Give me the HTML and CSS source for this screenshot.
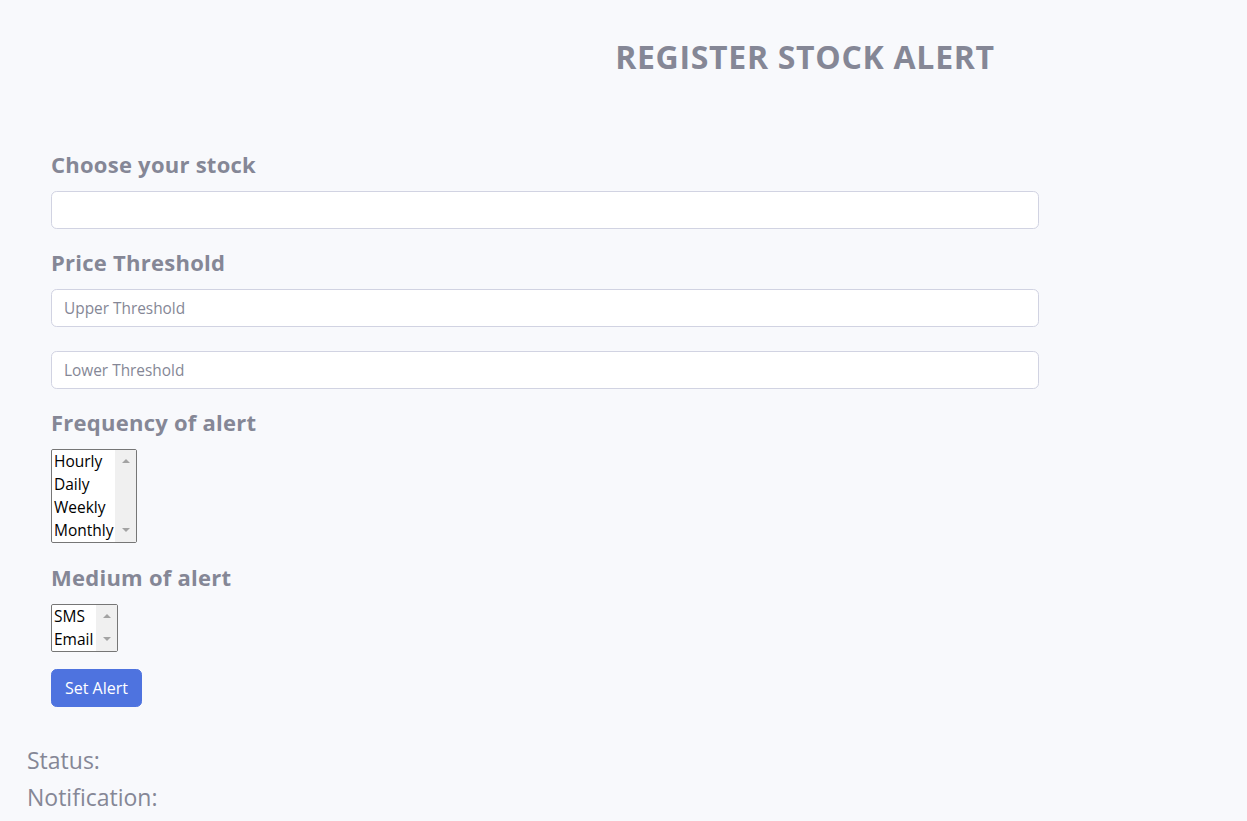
FILE: index.html
```html
<!DOCTYPE html>
<html lang="en">
<head>
<meta charset="utf-8">
<title>Register Stock Alert</title>
<link rel="stylesheet" href="styles.css">
</head>
<body>
<header class="page-head">
  <h2 class="title">REGISTER STOCK ALERT</h2>
</header>
<form class="alert-form">
  <label class="field-label" for="stock">Choose your stock</label>
  <input class="text-input block-gap" id="stock" type="text">

  <label class="field-label" for="upper">Price Threshold</label>
  <input class="text-input pair-gap" id="upper" type="text" placeholder="Upper Threshold">
  <input class="text-input block-gap" id="lower" type="text" placeholder="Lower Threshold">

  <label class="field-label" for="freq">Frequency of alert</label>
  <div class="list-box freq-gap">
    <select class="list-select freq" id="freq" multiple size="4">
      <option>Hourly</option>
      <option>Daily</option>
      <option>Weekly</option>
      <option>Monthly</option>
    </select>
    <div class="scroll-track" aria-hidden="true">
      <span class="arrow-up"></span>
      <span class="arrow-down"></span>
    </div>
  </div>

  <label class="field-label" for="medium">Medium of alert</label>
  <div class="list-box btn-gap">
    <select class="list-select medium" id="medium" multiple size="2">
      <option>SMS</option>
      <option>Email</option>
    </select>
    <div class="scroll-track" aria-hidden="true">
      <span class="arrow-up"></span>
      <span class="arrow-down"></span>
    </div>
  </div>

  <button class="btn-primary" type="button">Set Alert</button>
</form>
<section class="results">
  <h4 class="result-line">Status:</h4>
  <h4 class="result-line">Notification:</h4>
</section>
</body>
</html>
```
FILE: styles.css
```css
html, body {
  margin: 0;
  padding: 0;
}
body {
  background: #f8f9fc;
  color: #858796;
  font-family: "Open Sans", "Noto Sans", sans-serif;
  font-size: 16px;
  width: 1247px;
  min-height: 821px;
}
.page-head {
  padding: 38px 0 0 363px;
  text-align: center;
}
.title {
  margin: 0;
  font-size: 32px;
  line-height: 38px;
  font-weight: 700;
  letter-spacing: 0.7px;
  color: #858796;
}
.alert-form {
  display: flex;
  flex-direction: column;
  align-items: flex-start;
  margin: 76px 0 0 51px;
  width: 988px;
}
.field-label {
  display: block;
  font-size: 22px;
  line-height: 24px;
  font-weight: 700;
  letter-spacing: 0.25px;
  color: #858796;
  margin: 0 0 15px;
}
.text-input {
  box-sizing: border-box;
  width: 988px;
  height: 38px;
  padding: 6px 12px;
  border: 1px solid #d1d3e2;
  border-radius: 5.6px;
  background: #fff;
  font-family: inherit;
  font-size: 15.4px;
  color: #6e707e;
  outline: none;
}
.text-input::placeholder {
  color: #858796;
}
.block-gap {
  margin-bottom: 21px;
}
.pair-gap {
  margin-bottom: 24px;
}
.freq-gap {
  margin-bottom: 22px;
}
.btn-gap {
  margin-bottom: 17px;
}
.list-box {
  display: flex;
  border: 1px solid #767676;
  border-radius: 2px;
  background: #fff;
}
.list-select {
  box-sizing: border-box;
  font-family: inherit;
  font-size: 15.5px;
  color: #000;
  border: 0;
  background: #fff;
  padding: 0;
  outline: none;
  overflow: hidden;
  scrollbar-width: none;
}
.list-select option {
  padding: 0 2px;
  line-height: 23px;
  height: 23px;
}
.freq {
  width: 63px;
  height: 92px;
}
.medium {
  width: 44px;
  height: 46px;
}
.scroll-track {
  width: 21px;
  background: #f0f0f0;
  display: flex;
  flex-direction: column;
  align-items: center;
  justify-content: space-between;
  padding: 9px 0 10px;
  box-sizing: border-box;
}
.arrow-up {
  width: 0;
  height: 0;
  border-left: 4.5px solid transparent;
  border-right: 4.5px solid transparent;
  border-bottom: 4px solid #a3a3a3;
}
.arrow-down {
  width: 0;
  height: 0;
  border-left: 4.5px solid transparent;
  border-right: 4.5px solid transparent;
  border-top: 4px solid #a3a3a3;
}
.btn-primary {
  box-sizing: border-box;
  height: 38px;
  width: 91px;
  padding: 6px 12px;
  border: 1px solid #4e73df;
  border-radius: 5.6px;
  background: #4e73df;
  color: #fff;
  font-family: inherit;
  font-size: 16px;
  line-height: 24px;
}
.results {
  padding: 39px 0 0 27px;
}
.result-line {
  margin: 0 0 8px;
  font-size: 23px;
  line-height: 29px;
  font-weight: 400;
  color: #858796;
}
```
